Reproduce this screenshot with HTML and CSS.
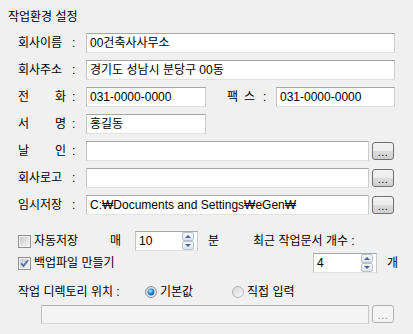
FILE: index.html
```html
<!DOCTYPE html>
<html lang="ko">
<head>
<meta charset="utf-8">
<title>작업환경 설정</title>
<link rel="stylesheet" href="styles.css">
</head>
<body>
<div class="panel">
  <div class="title">작업환경 설정</div>

  <div class="fields">
    <div class="row">
      <span class="lbl"><span class="name">회사이름</span><span class="colon">:</span></span>
      <div class="field w-full">00건축사사무소</div>
    </div>
    <div class="row">
      <span class="lbl"><span class="name">회사주소</span><span class="colon">:</span></span>
      <div class="field w-full">경기도 성남시 분당구 00동</div>
    </div>
    <div class="row">
      <span class="lbl"><span class="name spread"><span>전</span><span>화</span></span><span class="colon">:</span></span>
      <div class="field w-short">031-0000-0000</div>
      <span class="lbl fax-lbl"><span class="name spread"><span>팩</span><span>스</span></span><span class="colon">:</span></span>
      <div class="field w-fax">031-0000-0000</div>
    </div>
    <div class="row">
      <span class="lbl"><span class="name spread"><span>서</span><span>명</span></span><span class="colon">:</span></span>
      <div class="field w-short">홍길동</div>
    </div>
    <div class="row">
      <span class="lbl"><span class="name spread"><span>날</span><span>인</span></span><span class="colon">:</span></span>
      <div class="field w-mid"></div>
      <div class="browse">...</div>
    </div>
    <div class="row">
      <span class="lbl"><span class="name">회사로고</span><span class="colon">:</span></span>
      <div class="field w-mid"></div>
      <div class="browse">...</div>
    </div>
    <div class="row">
      <span class="lbl"><span class="name">임시저장</span><span class="colon">:</span></span>
      <div class="field w-mid">C:₩Documents and Settings₩eGen₩</div>
      <div class="browse">...</div>
    </div>
  </div>

  <div class="opts">
    <label class="check">
      <svg class="cb" width="13" height="13" viewBox="0 0 13 13">
        <defs>
          <linearGradient id="cbg1" x1="0" y1="0" x2="1" y2="1">
            <stop offset="0" stop-color="#c9c9c9"/>
            <stop offset="1" stop-color="#f6f6f6"/>
          </linearGradient>
        </defs>
        <rect x="0.5" y="0.5" width="12" height="12" fill="#f4f4f4" stroke="#8e8f8f"/>
        <rect x="2" y="2" width="9" height="9" fill="url(#cbg1)"/>
      </svg>
      <span>자동저장</span>
    </label>
    <span class="unit">매</span>
    <div class="field spin">
      <span>10</span>
      <span class="spinner"><span class="sb up"></span><span class="sb down"></span></span>
    </div>
    <span class="unit pad">분</span>
    <span class="recent">최근 작업문서 개수 :</span>

    <label class="check wide">
      <svg class="cb" width="13" height="13" viewBox="0 0 13 13">
        <defs>
          <linearGradient id="cbg2" x1="0" y1="0" x2="1" y2="1">
            <stop offset="0" stop-color="#c9c9c9"/>
            <stop offset="1" stop-color="#f6f6f6"/>
          </linearGradient>
        </defs>
        <rect x="0.5" y="0.5" width="12" height="12" fill="#f4f4f4" stroke="#8e8f8f"/>
        <rect x="2" y="2" width="9" height="9" fill="url(#cbg2)"/>
        <path d="M3.2 6.4 L5.4 9 L9.9 3.2" fill="none" stroke="#5a6fa6" stroke-width="1.8"/>
      </svg>
      <span>백업파일 만들기</span>
    </label>
    <div class="field spin spin2">
      <span>4</span>
      <span class="spinner"><span class="sb up"></span><span class="sb down"></span></span>
    </div>
    <span class="unit pad">개</span>
  </div>

  <div class="dir">
    <span class="dir-lbl">작업 디렉토리 위치 :</span>
    <label class="radio first">
      <svg width="12" height="12" viewBox="0 0 12 12">
        <defs>
          <radialGradient id="rdot" cx="0.4" cy="0.35" r="0.75">
            <stop offset="0" stop-color="#b6e6ff"/>
            <stop offset="0.45" stop-color="#3796e2"/>
            <stop offset="1" stop-color="#0d3f86"/>
          </radialGradient>
          <linearGradient id="rring1" x1="0" y1="0" x2="1" y2="1">
            <stop offset="0" stop-color="#d2d2d2"/>
            <stop offset="1" stop-color="#fafafa"/>
          </linearGradient>
        </defs>
        <circle cx="6" cy="6" r="5.5" fill="url(#rring1)" stroke="#8e8f8f"/>
        <circle cx="6" cy="6" r="3.4" fill="url(#rdot)"/>
      </svg>
      <span>기본값</span>
    </label>
    <label class="radio">
      <svg width="12" height="12" viewBox="0 0 12 12">
        <defs>
          <linearGradient id="rring2" x1="0" y1="0" x2="1" y2="1">
            <stop offset="0" stop-color="#d6d6d6"/>
            <stop offset="1" stop-color="#fbfbfb"/>
          </linearGradient>
        </defs>
        <circle cx="6" cy="6" r="5.5" fill="url(#rring2)" stroke="#b4b4b4"/>
      </svg>
      <span>직접 입력</span>
    </label>
  </div>

  <div class="dir-path">
    <div class="field disabled"></div>
    <div class="browse off">...</div>
  </div>
</div>
</body>
</html>
```

FILE: styles.css
```css
* { box-sizing: border-box; }
html, body { margin: 0; padding: 0; }
body {
  width: 413px;
  height: 334px;
  overflow: hidden;
  background: #f0f0f0;
  color: #000;
  font-family: "Liberation Sans", "Noto Sans CJK KR", sans-serif;
  font-size: 12px;
  line-height: 14px;
}
.panel { padding: 10px 0 0 8px; }
.title { height: 14px; }

.fields {
  display: flex;
  flex-direction: column;
  gap: 7px;
  margin-top: 9px;
  padding-left: 10px;
}
.row { display: flex; align-items: center; height: 20px; }
.lbl { display: flex; width: 68px; flex: none; }
.name { display: flex; width: 48px; }
.name.spread { justify-content: space-between; }
.colon { margin-left: 6px; }
.fax-lbl { width: 49px; margin-left: 21px; }
.fax-lbl .name { width: 28px; }
.fax-lbl .colon { margin-left: 8px; }

.field {
  height: 20px;
  background: #fff;
  border: 1px solid;
  border-color: #a5a5a5 #cbcbcb #e2e2e2 #c4c4c4;
  padding: 0 3px;
  display: flex;
  align-items: center;
  white-space: nowrap;
  overflow: hidden;
  flex: none;
}
.w-full { width: 309px; }
.w-short { width: 120px; }
.w-fax { width: 119px; }
.w-mid { width: 283px; }

.browse {
  flex: none;
  width: 22px;
  height: 18px;
  margin-left: 3px;
  border: 1px solid #707070;
  border-radius: 3px;
  background: linear-gradient(#f3f3f3, #ebebeb 50%, #dddddd 50%, #cfcfcf);
  font-size: 11px;
  line-height: 8px;
  display: flex;
  justify-content: center;
  align-items: flex-end;
  padding-bottom: 3px;
  letter-spacing: 0.5px;
  color: #000;
}
.browse.off {
  border-color: #adb2b5;
  background: #f4f4f4;
  color: #8a8a8a;
}

.opts {
  display: grid;
  grid-template-columns: 92px 25px 63px 55px 60px 64px auto;
  grid-template-rows: 20px 20px;
  row-gap: 2px;
  align-items: center;
  margin-top: 16px;
  padding-left: 10px;
}
.check { display: flex; align-items: center; gap: 3px; }
.check.wide { grid-column: 1 / 6; }
.cb { flex: none; }
.unit.pad { padding-left: 10px; }
.recent { grid-column: 5 / 8; white-space: nowrap; }
.spin { justify-content: space-between; padding-right: 3px; }
.spin2 { grid-column: 6; width: 64px; }
.spinner { display: flex; flex-direction: column; gap: 0; width: 12px; height: 18px; }
.sb {
  flex: 1;
  border: 1px solid #b7c2cf;
  border-radius: 2px;
  background: linear-gradient(#f6f8fa, #dde4ec);
  display: flex;
  align-items: center;
  justify-content: center;
}
.sb::after {
  content: "";
  width: 0;
  height: 0;
  border-left: 3px solid transparent;
  border-right: 3px solid transparent;
}
.sb.up::after { border-bottom: 3px solid #4b6190; }
.sb.down::after { border-top: 3px solid #4b6190; }

.dir {
  display: flex;
  align-items: center;
  height: 20px;
  margin-top: 9px;
  padding-left: 10px;
}
.dir-lbl { width: 127px; flex: none; white-space: nowrap; }
.radio { display: flex; align-items: center; gap: 3px; }
.radio.first { width: 87px; flex: none; }
.radio svg { flex: none; }

.dir-path {
  display: flex;
  align-items: center;
  margin-top: 2px;
  padding-left: 33px;
  height: 20px;
}
.field.disabled {
  width: 328px;
  height: 19px;
  background: #f4f4f4;
  border-color: #b0b0b0 #c8c8c8 #d6d6d6 #c0c0c0;
}
```
